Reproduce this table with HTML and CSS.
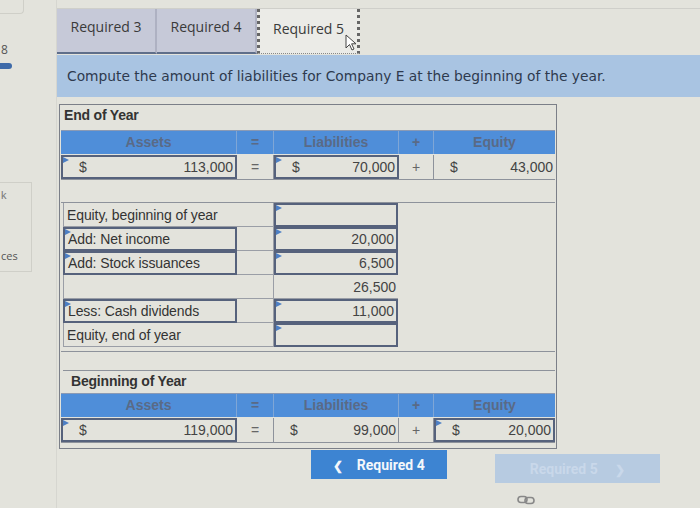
FILE: index.html
```html
<!DOCTYPE html>
<html>
<head>
<meta charset="utf-8">
<link rel="stylesheet" href="styles.css">
</head>
<body>
<div class="page">
  <aside class="side">
    <div class="side-card top"></div>
    <div class="side-num">8</div>
    <div class="side-pill"></div>
    <div class="side-box">
      <div class="side-k">k</div>
      <div class="side-ces">ces</div>
    </div>
  </aside>
  <main class="main">
    <nav class="tabs">
      <div class="tab">Required 3</div>
      <div class="tab">Required 4</div>
      <div class="tab active">Required 5<span class="cursor"><svg width="14" height="18" viewBox="0 0 14 18"><path d="M1 1 L1 14 L4.5 10.5 L7 16 L9 15 L6.6 9.8 L11 9.8 Z" fill="#fff" stroke="#444" stroke-width="1"/></svg></span></div>
    </nav>
    <div class="banner">Compute the amount of liabilities for Company E at the beginning of the year.</div>

    <section class="sheet">
      <div class="title">End of Year</div>
      <div class="grid head">
        <div class="h">Assets</div><div class="h op">=</div><div class="h">Liabilities</div><div class="h op">+</div><div class="h">Equity</div>
      </div>
      <div class="grid data">
        <div class="c inp"><span>$</span><span>113,000</span></div>
        <div class="c op">=</div>
        <div class="c inp"><span>$</span><span>70,000</span></div>
        <div class="c op">+</div>
        <div class="c"><span>$</span><span>43,000</span></div>
      </div>
      <div class="gap1"></div>

      <div class="eq">
        <div class="eqgrid">
          <div class="l plain">Equity, beginning of year</div><div class="m"></div><div class="v inp"></div>
          <div class="l inp">Add: Net income</div><div class="m"></div><div class="v inp">20,000</div>
          <div class="l inp">Add: Stock issuances</div><div class="m"></div><div class="v inp">6,500</div>
          <div class="l plain"></div><div class="m"></div><div class="v plain">26,500</div>
          <div class="l inp">Less: Cash dividends</div><div class="m"></div><div class="v inp">11,000</div>
          <div class="l plain">Equity, end of year</div><div class="m"></div><div class="v inp"></div>
        </div>
      </div>
      <div class="gap2"></div>

      <div class="title t2">Beginning of Year</div>
      <div class="grid head">
        <div class="h">Assets</div><div class="h op">=</div><div class="h">Liabilities</div><div class="h op">+</div><div class="h">Equity</div>
      </div>
      <div class="grid data">
        <div class="c inp"><span>$</span><span>119,000</span></div>
        <div class="c op">=</div>
        <div class="c"><span>$</span><span>99,000</span></div>
        <div class="c op">+</div>
        <div class="c inp"><span>$</span><span>20,000</span></div>
      </div>
    </section>

    <div class="nav">
      <button class="btn prev"><span class="chev">&#x276E;</span> Required 4</button>
      <button class="btn next">Required 5 <span class="chev">&#x276F;</span></button>
    </div>
    <div class="link">
      <svg width="18" height="10" viewBox="0 0 18 10"><rect x="1" y="1.5" width="9" height="6" rx="3" fill="none" stroke="#888" stroke-width="1.6"/><rect x="8" y="2.5" width="9" height="6" rx="3" fill="none" stroke="#888" stroke-width="1.6"/></svg>
    </div>
  </main>
</div>
</body>
</html>
```

FILE: styles.css
```css
* { box-sizing: border-box; }
html, body {
  margin: 0;
  padding: 0;
  width: 700px;
  height: 508px;
  overflow: hidden;
  background: #e3e3dc;
  font-family: "Liberation Sans", Arial, sans-serif;
  color: #333;
}
.page {
  display: flex;
  height: 508px;
}
.side {
  width: 57px;
  flex: none;
  display: flex;
  flex-direction: column;
  border-right: 1px solid #d6d6d0;
}
.side > * { flex-shrink: 0; }
.side-card.top {
  width: 24px;
  height: 14px;
  border: 1px solid #cfcfc8;
  border-top: none;
  border-left: none;
  border-radius: 0 0 4px 0;
}
.side-num {
  margin-top: 29px;
  font-family: "Open Sans", sans-serif;
  font-size: 12px;
  color: #555;
  margin-left: 1px;
  line-height: 14px;
}
.side-pill {
  margin-top: 6px;
  width: 12px;
  height: 6px;
  background: #3e6aa8;
  border-radius: 0 3px 3px 0;
}
.side-box {
  margin-top: 113px;
  width: 32px;
  height: 90px;
  border: 1px solid #cfcfc8;
  border-left: none;
}
.side-k {
  font-size: 11px;
  color: #777;
  margin-top: 6px;
  margin-left: 1px;
}
.side-ces {
  font-size: 11px;
  color: #555;
  margin-top: 47px;
  margin-left: 1px;
  font-family: "Open Sans", sans-serif;
}
.main {
  flex: 1;
  display: flex;
  flex-direction: column;
}
.main > * { flex-shrink: 0; }
.tabs {
  margin-top: 8px;
  height: 46px;
  display: flex;
  border-top: 1px solid #cfcfca;
}
.tab {
  width: 100px;
  height: 45px;
  background: #c6c9d8;
  border-right: 2px solid #aeb1c2;
  border-bottom: 2px solid #5e6e8a;
  font-family: "Open Sans", sans-serif;
  font-size: 14px;
  color: #3a3a3a;
  display: flex;
  align-items: center;
  justify-content: center;
  padding-bottom: 8px;
}
.tab.active {
  width: 103px;
  background: #ebebe7;
  border-left: 3px dotted #666;
  border-right: 3px dotted #666;
  border-bottom: 1px dotted #888;
  position: relative;
  padding-bottom: 6px;
}
.cursor {
  position: absolute;
  left: 85px;
  top: 25px;
}
.banner {
  margin-top: 1px;
  height: 42px;
  background: #a9c4e2;
  font-family: "DejaVu Sans", Verdana, sans-serif;
  font-size: 13.8px;
  color: #2e3a4e;
  padding-left: 10px;
  padding-top: 13px;
  white-space: nowrap;
}
.sheet {
  margin-top: 7px;
  margin-left: 2px;
  width: 498px;
  border: 1px solid #7b7f88;
  padding: 0 1px 5px 1px;
}
.title {
  height: 25px;
  font-weight: bold;
  font-size: 14px;
  padding: 2px 0 0 3px;
  color: #333;
  letter-spacing: -0.2px;
}
.grid {
  display: grid;
  grid-template-columns: 176px 37px 125px 35px 121px;
}
.head {
  height: 24px;
  background: #4f8ed9;
  border-top: 1px solid #8a9ab5;
}
.h {
  text-align: center;
  font-weight: bold;
  font-size: 14px;
  color: #5a6a86;
  padding-top: 3px;
  border-right: 1px solid #7fa6d6;
}
.h:last-child { border-right: none; }
.data {
  height: 25px;
  margin-top: 1px;
  border-bottom: 1px solid #8d929b;
}
.c {
  display: flex;
  justify-content: space-between;
  align-items: center;
  font-size: 14px;
  color: #444;
  padding: 0 2px 0 16px;
  border-right: 1px solid #8d929b;
}
.c:last-child { border-right: none; }
.c.op {
  justify-content: center;
  padding: 0;
  color: #666;
}
.inp {
  border: 2px solid #56627c;
  position: relative;
}
.inp::before {
  content: "";
  position: absolute;
  left: 0;
  top: 0;
  border-left: 6px solid #4d7fc4;
  border-top: 3px solid transparent;
  border-bottom: 3px solid transparent;
}
.c.inp { border-right: 2px solid #56627c; }
.gap1 { height: 22px; }
.eq {
  border-top: 1px solid #8d929b;
  border-bottom: 1px solid #8d929b;
  padding: 0 0 4px 2px;
}
.eqgrid {
  display: grid;
  grid-template-columns: 174px 37px 124px;
  grid-auto-rows: 24px;
}
.l {
  font-size: 14px;
  color: #333;
  display: flex;
  align-items: center;
  padding-left: 3px;
  letter-spacing: -0.1px;
}
.l.plain {
  border-bottom: 1px solid #9a9ea6;
  border-left: 1px solid #9a9ea6;
}
.m {
  border-bottom: 1px solid #9a9ea6;
  border-right: 1px solid #9a9ea6;
}
.v {
  font-size: 14px;
  color: #444;
  display: flex;
  align-items: center;
  justify-content: flex-end;
  padding-right: 2px;
}
.v.plain {
  border-bottom: 1px solid #9a9ea6;
}
.gap2 { height: 18px; }
.t2 {
  height: 23px;
  border-top: 1px solid #8d929b;
  margin-left: 2px;
  padding-left: 8px;
}
.nav {
  display: flex;
  gap: 48px;
  margin-top: 1px;
  margin-left: 254px;
  align-items: flex-start;
}
.btn {
  border: none;
  font-family: "Roboto", "Liberation Sans", sans-serif;
  font-weight: bold;
  font-size: 14px;
  height: 29px;
}
.btn.prev {
  width: 136px;
  background: #3d84d2;
  color: #f4f7fb;
}
.btn.next {
  width: 165px;
  margin-top: 4px;
  background: #b7cbe1;
  color: #c9d8ea;
}
.chev {
  font-size: 12px;
  margin-right: 10px;
}
.next .chev { margin: 0 0 0 14px; }
.link {
  margin-left: 460px;
  margin-top: 8px;
}
```
